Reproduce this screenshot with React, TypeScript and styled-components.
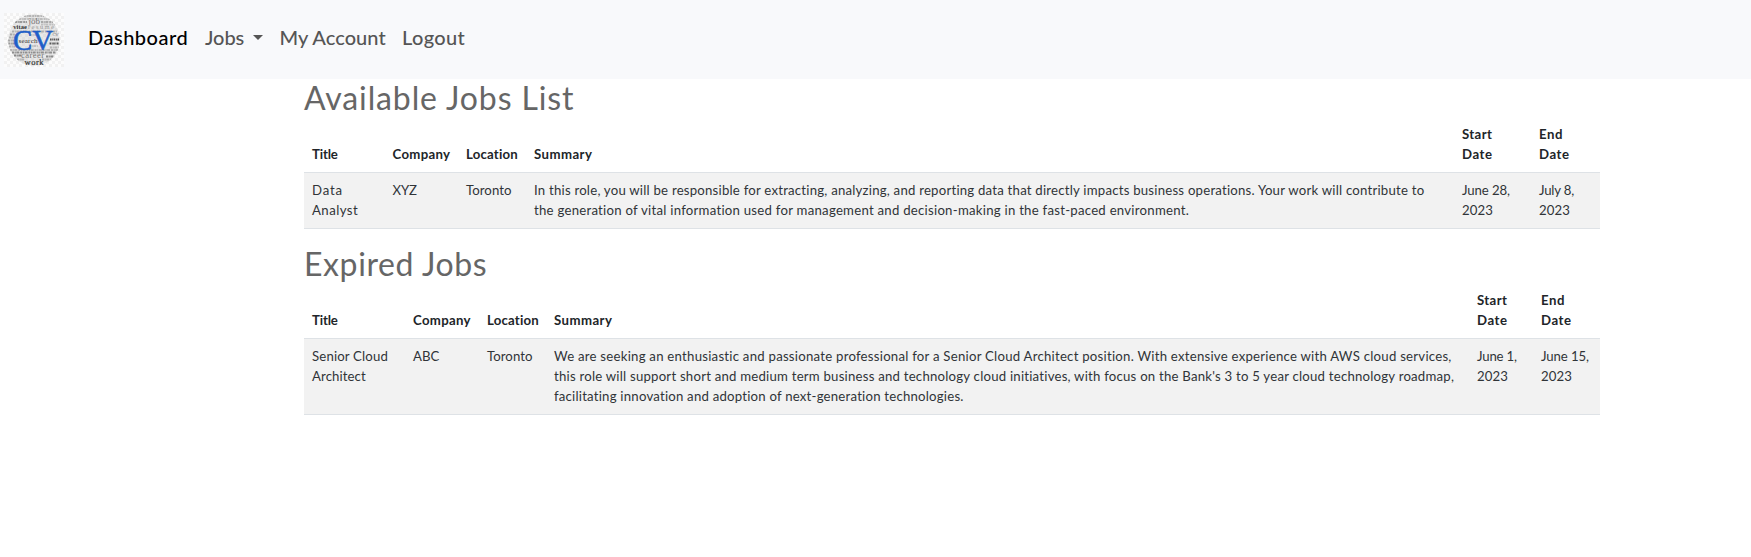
import React from 'react';
import styled, { createGlobalStyle } from 'styled-components';

const GlobalStyle = createGlobalStyle`
  *, *::before, *::after { box-sizing: border-box; }
  body {
    margin: 0;
    background: #fff;
    color: #212529;
    font-family: Lato, "Open Sans", sans-serif;
    font-size: 13.2px;
    line-height: 1.5;
  }
`;

const Navbar = styled.nav`
  display: flex;
  align-items: center;
  height: 79px;
  padding-left: 4px;
  background: #f8f9fb;
`;

const Brand = styled.a`
  display: block;
  width: 60px;
  height: 54px;
  margin-right: 15px;
`;

const NavList = styled.ul`
  display: flex;
  margin: 0 0 5px;
  padding: 0;
  list-style: none;
`;

const NavItem = styled.li<{ $width: number; $active?: boolean; $spacing: number }>`
  display: flex;
  align-items: center;
  width: ${p => p.$width}px;
  padding-left: 9px;
  color: ${p => (p.$active ? '#000' : '#555')};
  font-size: 20px;
  font-weight: 500;
  line-height: 30px;
  letter-spacing: ${p => p.$spacing}px;
  white-space: nowrap;
`;

const Caret = styled.span`
  margin: 1px 0 0 9px;
  border-top: 5px solid #555;
  border-left: 5px solid transparent;
  border-right: 5px solid transparent;
`;

const Content = styled.main`
  width: 1296px;
  margin-left: 304px;
`;

const Section = styled.section`
  margin-bottom: 16px;
`;

const Heading = styled.h2<{ $spacing: number }>`
  margin: 0;
  color: #666;
  font-size: 32px;
  font-weight: 400;
  line-height: 38.4px;
  letter-spacing: ${p => p.$spacing}px;
`;

const Table = styled.table`
  width: 100%;
  table-layout: fixed;
  border-collapse: collapse;
`;

const Col = styled.col<{ $width: number }>`
  width: ${p => p.$width}px;
`;

const HeadCell = styled.th`
  padding: 8px 0 7px 8px;
  border-bottom: 1px solid #dee2e6;
  text-align: left;
  vertical-align: bottom;
  font-weight: 700;
`;

const Cell = styled.td`
  padding: 8px 0 7.4px 8px;
  border-bottom: 1px solid #dee2e6;
  background: #f2f2f2;
  color: #303438;
  vertical-align: top;
`;

const Line = styled.span<{ $spacing: number }>`
  display: block;
  white-space: nowrap;
  letter-spacing: ${p => p.$spacing}px;
`;

type TextLine = [text: string, spacing: number];

const columns: TextLine[][] = [
  [['Title', -0.15]],
  [['Company', 0.31]],
  [['Location', 0.2]],
  [['Summary', 0.458]],
  [['Start', 0.385], ['Date', 0.56]],
  [['End', 0.56], ['Date', 0.56]],
];

const available: TextLine[][] = [
  [['Data', 0.8], ['Analyst', 0.447]],
  [['XYZ', -0.1]],
  [['Toronto', 0.063]],
  [
    ['In this role, you will be responsible for extracting, analyzing, and reporting data that directly impacts business operations. Your work will contribute to', 0.219],
    ['the generation of vital information used for management and decision-making in the fast-paced environment.', 0.25],
  ],
  [['June 28,', -0.1], ['2023', 0.118]],
  [['July 8,', -0.2], ['2023', 0.118]],
];

const expired: TextLine[][] = [
  [['Senior Cloud', 0.154], ['Architect', 0.099]],
  [['ABC', 0.023]],
  [['Toronto', 0.063]],
  [
    ['We are seeking an enthusiastic and passionate professional for a Senior Cloud Architect position. With extensive experience with AWS cloud services,', 0.24],
    ["this role will support short and medium term business and technology cloud initiatives, with focus on the Bank's 3 to 5 year cloud technology roadmap,", 0.22],
    ['facilitating innovation and adoption of next-generation technologies.', 0.215],
  ],
  [['June 1,', -0.181], ['2023', 0.118]],
  [['June 15,', -0.105], ['2023', 0.118]],
];

const Lines = ({ lines }: { lines: TextLine[] }) => (
  <>
    {lines.map(([text, spacing]) => (
      <Line key={text} $spacing={spacing}>{text}</Line>
    ))}
  </>
);

const JobTable = ({ widths, job }: { widths: number[]; job: TextLine[][] }) => (
  <Table>
    <colgroup>{widths.map((w, i) => <Col key={i} $width={w} />)}</colgroup>
    <thead>
      <tr>{columns.map((c, i) => <HeadCell key={i}><Lines lines={c} /></HeadCell>)}</tr>
    </thead>
    <tbody>
      <tr>{job.map((c, i) => <Cell key={i}><Lines lines={c} /></Cell>)}</tr>
    </tbody>
  </Table>
);

/* Rows of unreadably small words in the word cloud: x, y, length, grey */
const cloudRows: [number, number, number, string][] = [
  [20, 3, 20, '#b5b5b5'],
  [15, 6, 31, '#bdbdbd'],
  [11, 9, 12, '#999'],
  [37, 9, 12, '#a8a8a8'],
  [37, 11.5, 14, '#c0c0c0'],
  [8, 18.5, 45, '#b0b0b0'],
  [6, 21.5, 5, '#a5a5a5'],
  [5, 24.5, 6, '#b5b5b5'],
  [4, 27.5, 6, '#a5a5a5'],
  [4, 30.5, 7, '#999'],
  [5, 33.5, 6, '#b5b5b5'],
  [46, 34.5, 9, '#b5b5b5'],
  [26, 22, 8, '#c4c4c4'],
  [25, 33, 9, '#c0c0c0'],
  [6, 37, 48, '#b5b5b5'],
  [8, 39.5, 44, '#8f8f8f'],
  [10, 42.5, 8, '#888'],
  [42, 43.5, 8, '#8a8a8a'],
  [13, 46.5, 8, '#b0b0b0'],
  [38, 46.5, 9, '#b0b0b0'],
];

const Logo = () => (
  <svg width="60" height="54" viewBox="0 0 60 54" fontFamily="Liberation Serif, serif">
    <defs>
      <pattern id="check" width="6" height="6" patternUnits="userSpaceOnUse">
        <rect width="6" height="6" fill="#fcfcfc" />
        <path d="M0 0h3v3H0zM3 3h3v3H3z" fill="#f1f1f1" />
      </pattern>
      <clipPath id="disc"><circle cx="30" cy="27" r="26" /></clipPath>
    </defs>
    <rect width="60" height="54" fill="url(#check)" />
    <g clipPath="url(#disc)">
      <circle cx="30" cy="27" r="26" fill="#bbb" opacity=".3" />
      {cloudRows.map(([x, y, length, stroke]) => (
        <path key={`${x}-${y}`} d={`M${x} ${y}h${length}`} stroke={stroke} strokeWidth="1.8" strokeDasharray="2 .6 1.2 .5 3 .9" />
      ))}
    </g>
    <text x="24.5" y="11.2" fontSize="9" fill="#777">job</text>
    <text x="9.3" y="15.8" fontSize="6.5" fill="#333" fontWeight="700" textLength="13.5">vitae</text>
    <text x="24" y="15.8" fontSize="6.5" fill="#999" textLength="26">resume</text>
    <text x="48.5" y="23.4" fontSize="4.5" fill="#666" textLength="6">CV</text>
    <text x="9" y="37.2" fontSize="30" fill="#1f5fc8" stroke="#1f5fc8" strokeWidth=".6" textLength="40" lengthAdjust="spacingAndGlyphs">CV</text>
    <text x="14.5" y="29.5" fontSize="7" fill="#333" textLength="19">search</text>
    <path d="M46 26.5h9.5M45.5 30.5h9" stroke="#555" strokeWidth="2.2" strokeDasharray="1.6 .6 1 .5" />
    <text x="17" y="44.6" fontSize="8.5" fill="#777" textLength="23">career</text>
    <text x="20.5" y="51.6" fontSize="8.5" fill="#333" stroke="#333" strokeWidth=".2" textLength="19">work</text>
  </svg>
);

export default function App() {
  return (
    <>
      <GlobalStyle />
      <Navbar>
        <Brand><Logo /></Brand>
        <NavList>
          <NavItem $width={117} $active $spacing={0.5}>Dashboard</NavItem>
          <NavItem $width={74.5} $spacing={-0.05}>Jobs<Caret /></NavItem>
          <NavItem $width={122.5} $spacing={0.05}>My Account</NavItem>
          <NavItem $width={80} $spacing={0.34}>Logout</NavItem>
        </NavList>
      </Navbar>
      <Content>
        <Section>
          <Heading $spacing={0.88}>Available Jobs List</Heading>
          <JobTable widths={[80.5, 73.5, 68, 928, 77, 69]} job={available} />
        </Section>
        <Section>
          <Heading $spacing={0.6}>Expired Jobs</Heading>
          <JobTable widths={[101, 74, 67, 923, 64, 67]} job={expired} />
        </Section>
      </Content>
    </>
  );
}
